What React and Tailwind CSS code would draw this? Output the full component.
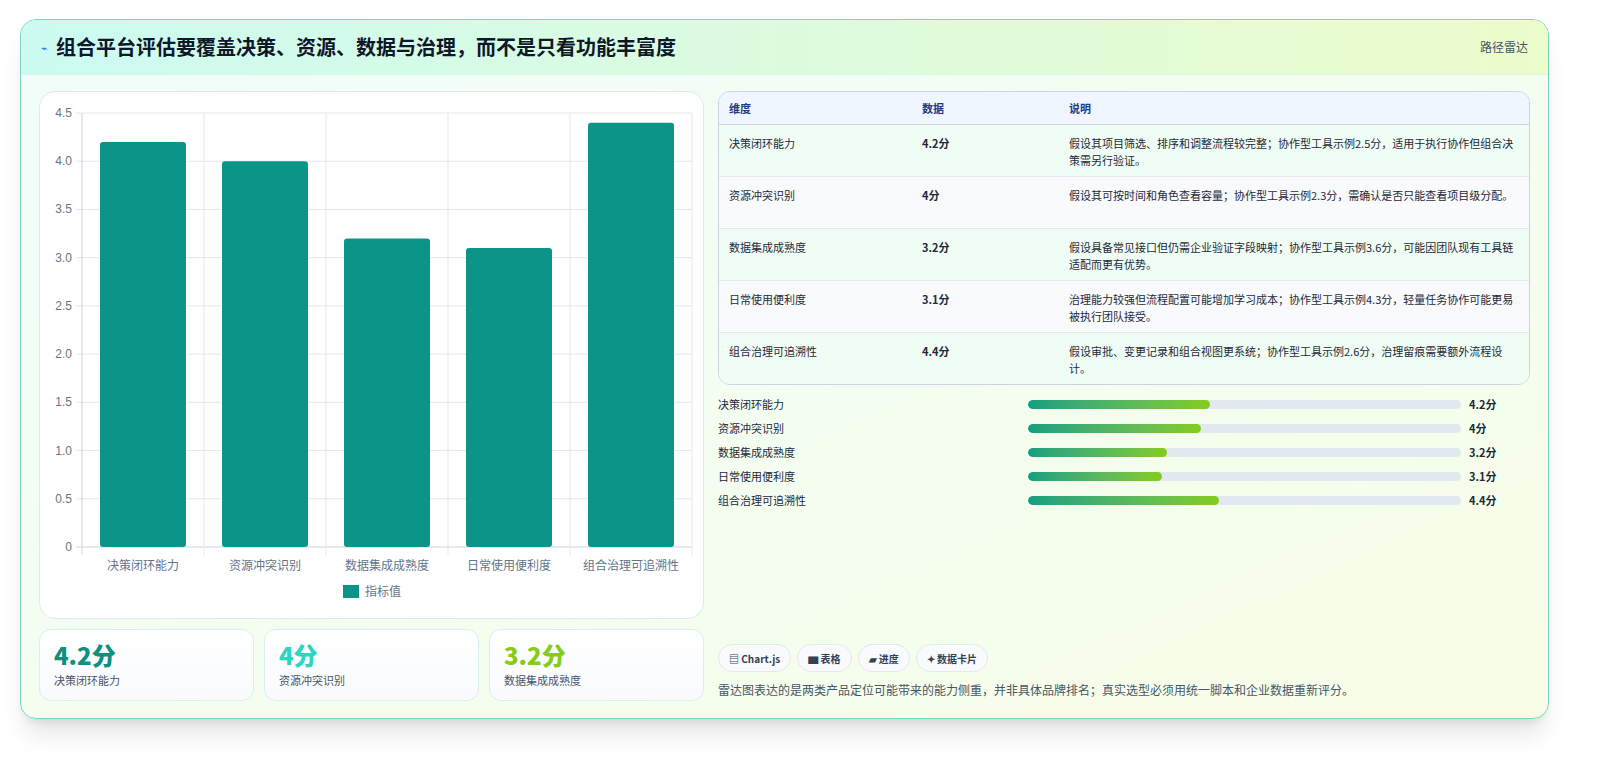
import React from 'react';

const rows = [
  { name: '决策闭环能力', v: 4.2, note: '假设其项目筛选、排序和调整流程较完整；协作型工具示例2.5分，适用于执行协作但组合决策需另行验证。' },
  { name: '资源冲突识别', v: 4, note: '假设其可按时间和角色查看容量；协作型工具示例2.3分，需确认是否只能查看项目级分配。' },
  { name: '数据集成成熟度', v: 3.2, note: '假设具备常见接口但仍需企业验证字段映射；协作型工具示例3.6分，可能因团队现有工具链适配而更有优势。' },
  { name: '日常使用便利度', v: 3.1, note: '治理能力较强但流程配置可能增加学习成本；协作型工具示例4.3分，轻量任务协作可能更易被执行团队接受。' },
  { name: '组合治理可追溯性', v: 4.4, note: '假设审批、变更记录和组合视图更系统；协作型工具示例2.6分，治理留痕需要额外流程设计。' },
];

const font = { fontFamily: '"Noto Sans CJK SC", "Liberation Sans", sans-serif' };

const Chart = () => {
  const x0 = 42, x1 = 652, y0 = 21, y1 = 455;
  const cw = (x1 - x0) / 5;
  const ys = v => y1 - (v / 4.5) * (y1 - y0);
  const ticks = [0, 0.5, 1, 1.5, 2, 2.5, 3, 3.5, 4, 4.5];
  return (
    <svg width="663" height="525" className="block" style={font}>
      {ticks.map(t => (
        <g key={t}>
          <line x1={x0 - 6} x2={x1} y1={ys(t)} y2={ys(t)} stroke={t === 0 ? '#cbd5e1' : '#e5e7eb'} />
          <text x={x0 - 10} y={ys(t) + 4} textAnchor="end" fontSize="12" fill="#6b7280" fontFamily="Liberation Sans">
            {t === 0 ? '0' : t.toFixed(1)}
          </text>
        </g>
      ))}
      {[0, 1, 2, 3, 4, 5].map(i => (
        <line key={i} x1={x0 + i * cw} x2={x0 + i * cw} y1={y0} y2={y1 + 8} stroke={i === 0 ? '#cbd5e1' : '#e5e7eb'} />
      ))}
      {rows.map((r, i) => (
        <g key={r.name}>
          <rect x={x0 + i * cw + 18} y={ys(r.v)} width={cw - 36} height={y1 - ys(r.v)} rx="3" fill="#0d9488" />
          <text x={x0 + i * cw + cw / 2} y={478} textAnchor="middle" fontSize="12" fill="#64748b">{r.name}</text>
        </g>
      ))}
      <rect x="303" y="493" width="16" height="13" fill="#0d9488" />
      <text x="325" y="504" fontSize="12" fill="#64748b">指标值</text>
    </svg>
  );
};

export default function App() {
  return (
    <div className="w-[1615px] h-[761px] overflow-hidden bg-white pt-[19px] pl-[20px]" style={font}>
      <div className="w-[1529px] h-[700px] flex flex-col rounded-2xl border border-[#7dd3c0] shadow-xl overflow-hidden bg-gradient-to-br from-[#f0fdfa] to-[#f7fee7]">
        <div className="h-[55px] shrink-0 flex items-center justify-between px-[20px] border-b border-[#d1fae5] bg-gradient-to-r from-[#ccfbf1] to-[#ecfccb]">
          <div className="flex items-center gap-2">
            <span className="text-[11px] text-[#2563eb]">⌁</span>
            <h1 className="text-[20px] font-bold text-[#0f172a]">组合平台评估要覆盖决策、资源、数据与治理，而不是只看功能丰富度</h1>
          </div>
          <span className="text-[12px] text-[#475569]">路径雷达</span>
        </div>
        <div className="flex-1 flex gap-[14px] px-[18px] pt-[16px] pb-[17px]">
          <div className="w-[665px] shrink-0 flex flex-col gap-[10px]">
            <div className="h-[528px] shrink-0 rounded-2xl border border-[#e2e8f0] bg-white">
              <Chart />
            </div>
            <div className="grid grid-cols-3 gap-[10px]">
              {[['4.2分', '决策闭环能力', 'text-[#0f8f7e]'], ['4分', '资源冲突识别', 'text-[#2dd4bf]'], ['3.2分', '数据集成成熟度', 'text-[#84cc16]']].map(([v, l, c]) => (
                <div key={l} className="h-[72px] rounded-xl border border-[#d8eef0] bg-gradient-to-b from-white to-[#f8fafc] px-[14px] pt-[10px]">
                  <div className={`text-[24px] font-extrabold leading-[30px] ${c}`}>{v}</div>
                  <div className="text-[11px] text-[#475569] mt-[2px]">{l}</div>
                </div>
              ))}
            </div>
          </div>
          <div className="flex-1 flex flex-col">
            <div className="rounded-xl border border-[#cbd5e1] overflow-hidden">
              <table className="w-full text-[11px] text-[#1e293b]">
                <thead>
                  <tr className="bg-[#eff6ff] h-[32px] text-left text-[#1e3a8a] border-b border-[#cbd5e1]">
                    <th className="font-semibold pl-[10px] w-[203px]">维度</th>
                    <th className="font-semibold w-[147px]">数据</th>
                    <th className="font-semibold">说明</th>
                  </tr>
                </thead>
                <tbody>
                  {rows.map((r, i) => (
                    <tr key={r.name} className={`${i % 2 ? 'bg-[#f8fafc]' : 'bg-[#f0fdf4]'} border-b last:border-b-0 border-[#e2e8f0] h-[52px] align-top`}>
                      <td className="pl-[10px] pt-[10px]">{r.name}</td>
                      <td className="pt-[10px] font-semibold">{r.v}分</td>
                      <td className="pt-[10px] pr-[10px] leading-[17px]">{r.note}</td>
                    </tr>
                  ))}
                </tbody>
              </table>
            </div>
            <div className="mt-[10px] flex flex-col gap-[6px]">
              {rows.map(r => (
                <div key={r.name} className="h-[18px] flex items-center text-[11px] text-[#1e293b]">
                  <span className="w-[310px]">{r.name}</span>
                  <div className="w-[433px] h-[9px] rounded-full bg-[#e2e8f0] overflow-hidden">
                    <div className="h-full rounded-full bg-gradient-to-r from-[#0f9f80] to-[#84cc16]" style={{ width: `${(r.v / 10) * 100}%` }} />
                  </div>
                  <span className="ml-[8px] font-bold">{r.v}分</span>
                </div>
              ))}
            </div>
            <div className="flex-1" />
            <div className="flex gap-[6px] mb-[9px]">
              {['▤ Chart.js', '▆ 表格', '▰ 进度', '✦ 数据卡片'].map(c => (
                <span key={c} className="h-[28px] px-[10px] flex items-center rounded-full border border-[#e2e8f0] bg-[#f8fafc] text-[10px] font-semibold text-[#334155]">{c}</span>
              ))}
            </div>
            <p className="text-[12px] text-[#475569] mb-[2px]">雷达图表达的是两类产品定位可能带来的能力侧重，并非具体品牌排名；真实选型必须用统一脚本和企业数据重新评分。</p>
          </div>
        </div>
      </div>
    </div>
  );
}
